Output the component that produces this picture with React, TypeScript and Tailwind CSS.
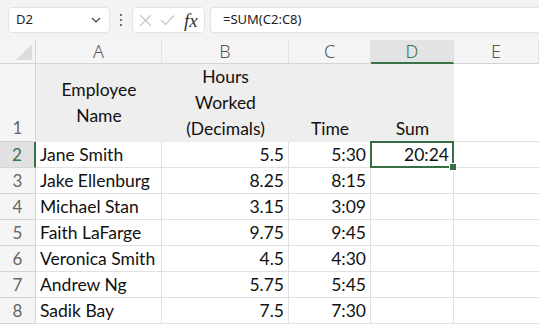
import React from "react";

const cols = ["A", "B", "C", "D", "E"];
const data: [string, string, string][] = [
  ["Jane Smith", "5.5", "5:30"],
  ["Jake Ellenburg", "8.25", "8:15"],
  ["Michael Stan", "3.15", "3:09"],
  ["Faith LaFarge", "9.75", "9:45"],
  ["Veronica Smith", "4.5", "4:30"],
  ["Andrew Ng", "5.75", "5:45"],
  ["Sadik Bay", "7.5", "7:30"],
];

const cellFont = { fontFamily: "Lato, 'Open Sans', sans-serif" };

export default function App() {
  return (
    <div className="w-[539px] h-[326px] overflow-hidden bg-white relative" style={{ fontFamily: "'Noto Sans', 'Open Sans', sans-serif" }}>
      {/* toolbar */}
      <div className="h-[40px] bg-[#f3f3f3] flex items-start pt-[7px] pl-[8px] gap-0">
        <div className="w-[102px] h-[26px] bg-white border border-[#e3e3e3] rounded-[4px] flex items-center justify-between pl-[7px] pr-[8px]">
          <span className="text-[13px] text-[#222]">D2</span>
          <svg width="10" height="6" viewBox="0 0 10 6" fill="none">
            <path d="M1 1 L5 5 L9 1" stroke="#444" strokeWidth="1.2" />
          </svg>
        </div>
        <div className="w-[22px] h-[26px] flex flex-col items-center justify-center gap-[3px]">
          <div className="w-[2px] h-[2px] bg-[#444] rounded-full" />
          <div className="w-[2px] h-[2px] bg-[#444] rounded-full" />
          <div className="w-[2px] h-[2px] bg-[#444] rounded-full" />
        </div>
        <div className="w-[73px] h-[26px] bg-white border border-[#e3e3e3] rounded-[4px] flex items-center pl-[6px] gap-[8px]">
          <svg width="13" height="13" viewBox="0 0 13 13">
            <path d="M1 1 L12 12 M12 1 L1 12" stroke="#c4c4c4" strokeWidth="1.1" />
          </svg>
          <svg width="15" height="12" viewBox="0 0 15 12" fill="none">
            <path d="M1 6 L5.5 10.5 L14 1.5" stroke="#c4c4c4" strokeWidth="1.1" />
          </svg>
          <span className="text-[19px] italic text-[#333] leading-none ml-[1px]" style={{ fontFamily: "'Liberation Serif', serif" }}>fx</span>
        </div>
        <div className="ml-[5px] flex-1 h-[26px] bg-white border border-[#e3e3e3] rounded-l-[4px] border-r-0 flex items-center pl-[12px]">
          <span className="text-[13px] text-[#222]">=SUM(C2:C8)</span>
        </div>
      </div>

      {/* grid */}
      <div className="grid grid-cols-[36px_126px_127px_82px_83px_1fr] grid-rows-[24px_78px_repeat(8,26px)]">
        {/* corner */}
        <div className="bg-[#f5f5f5] border-r border-b border-[#d4d4d4] flex items-end justify-end pr-[3px] pb-[3px]">
          <svg width="16" height="16" viewBox="0 0 16 16">
            <path d="M16 0 L16 16 L0 16 Z" fill="#dcdcdc" />
          </svg>
        </div>
        {cols.map((c) =>
          c === "D" ? (
            <div key={c} className="bg-[#e3e3e3] border-b-2 border-b-[#3a7348] border-r border-r-[#dcdcdc] flex items-center justify-center text-[18px] text-[#3a7348] font-light">
              {c}
            </div>
          ) : (
            <div key={c} className="bg-[#f5f5f5] border-b border-b-[#d4d4d4] border-r border-r-[#e3e3e3] flex items-center justify-center text-[18px] text-[#555] font-light">
              {c}
            </div>
          )
        )}

        {/* row 1 */}
        <div className="bg-[#f5f5f5] border-r border-b border-[#d4d4d4] flex items-end justify-center text-[17px] text-[#666] leading-[26px]" style={cellFont}>1</div>
        <div className="bg-[#eeeeee] flex items-center justify-center text-center text-[17.5px] leading-[26px] text-[#111]" style={cellFont}>
          Employee<br />Name
        </div>
        <div className="bg-[#eeeeee] flex items-center justify-center text-center text-[17.5px] leading-[26px] text-[#111]" style={cellFont}>
          Hours<br />Worked<br />(Decimals)
        </div>
        <div className="bg-[#eeeeee] flex items-end justify-center text-[17.5px] leading-[26px] text-[#111]" style={cellFont}>Time</div>
        <div className="bg-[#eeeeee] flex items-end justify-center text-[17.5px] leading-[26px] text-[#111]" style={cellFont}>Sum</div>
        <div className="border-b border-[#e1e1e1]" />

        {data.map((r, i) => {
          const rowNum = i + 2;
          const sel = rowNum === 2;
          return (
            <React.Fragment key={rowNum}>
              <div
                className={
                  sel
                    ? "bg-[#e1e1e1] border-r-2 border-r-[#3a7348] border-b border-b-[#d4d4d4] flex items-center justify-center text-[17px] text-[#3a7348] leading-[26px]"
                    : "bg-[#f5f5f5] border-r border-b border-[#d4d4d4] flex items-center justify-center text-[17px] text-[#666] leading-[26px]"
                }
                style={cellFont}
              >
                {rowNum}
              </div>
              <div className="border-r border-b border-[#e1e1e1] pl-[4px] text-[17.5px] leading-[26px] text-[#111] whitespace-nowrap" style={cellFont}>{r[0]}</div>
              <div className="border-r border-b border-[#e1e1e1] pr-[4px] text-right text-[17.5px] leading-[26px] text-[#111]" style={cellFont}>{r[1]}</div>
              <div className="border-r border-b border-[#e1e1e1] pr-[4px] text-right text-[17.5px] leading-[26px] text-[#111]" style={cellFont}>{r[2]}</div>
              {sel ? (
                <div className="relative border-r border-b border-[#e1e1e1]">
                  <div className="absolute left-[-1px] top-[-1px] right-[-1px] bottom-[-1px] border-2 border-[#366f43] pr-[3px] text-right text-[17.5px] leading-[24px] text-[#111]" style={cellFont}>
                    20:24
                  </div>
                  <div className="absolute right-[-4px] bottom-[-4px] w-[6px] h-[6px] bg-[#366f43] border border-white box-content" />
                </div>
              ) : (
                <div className="border-r border-b border-[#e1e1e1]" />
              )}
              <div className="border-b border-[#e1e1e1]" />
            </React.Fragment>
          );
        })}
      </div>
    </div>
  );
}
